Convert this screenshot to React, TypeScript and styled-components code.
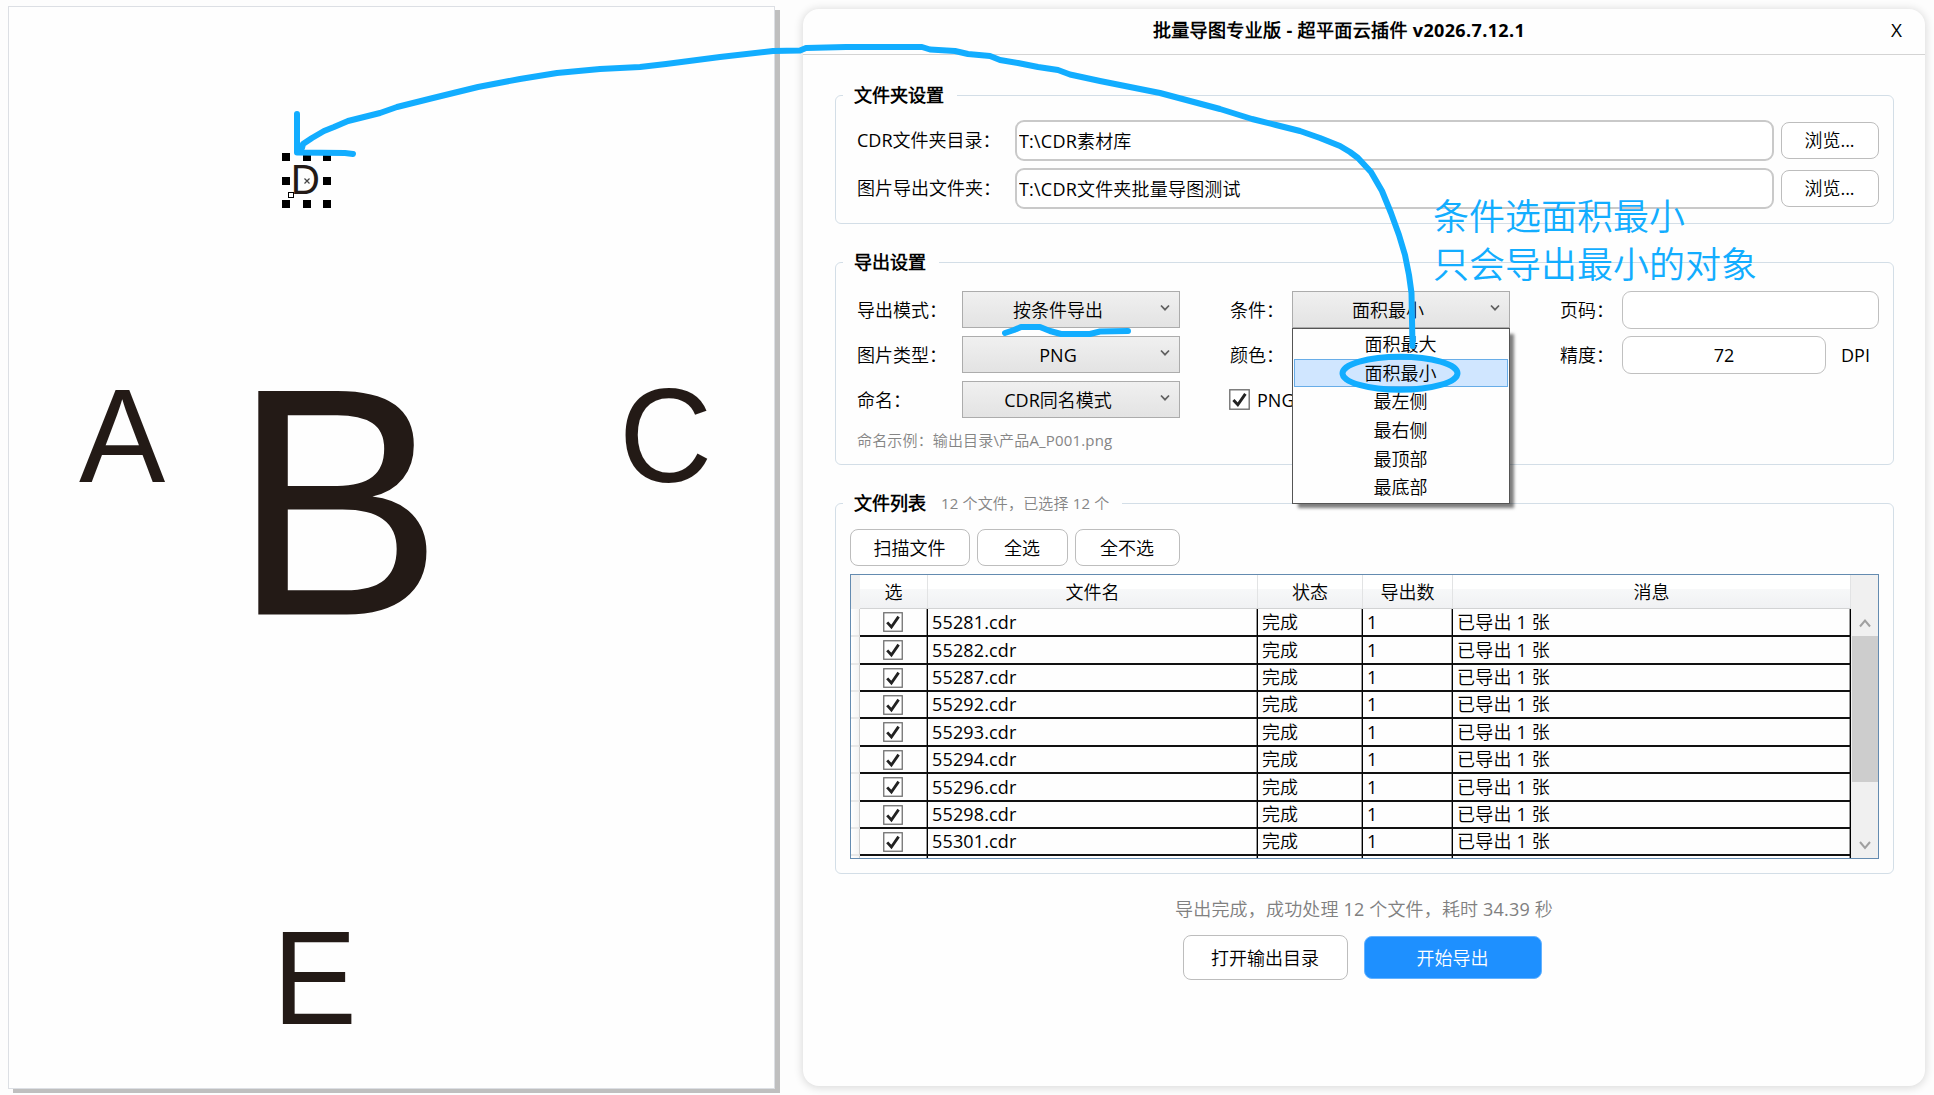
import React from "react";
import styled, { createGlobalStyle } from "styled-components";

const BLUE = "#12adff";
const INK = "#231a16";

const GlobalStyle = createGlobalStyle`
  * { box-sizing: border-box; }
  html, body { margin: 0; padding: 0; background: #fdfdfd; overflow: hidden; }
  body {
    font-family: "Open Sans", "Noto Sans CJK SC DemiLight", "Noto Sans CJK SC", sans-serif;
    font-size: 18px;
    font-weight: 400;
    color: #000;
  }
  button, input { font: inherit; color: inherit; }
`;

const Desktop = styled.main`
  position: relative;
  display: flex;
  align-items: flex-start;
  width: 1934px;
  height: 1095px;
  padding: 6px 9px 0 8px;
  overflow: hidden;
`;

const Paper = styled.section`
  width: 767px;
  height: 1083px;
  flex: none;
  background: #fefefe;
  border: 1px solid #dcdfe4;
  box-shadow: 5px 4px 0 #bfbfbf;
`;

const Artwork = styled.svg`
  display: block;
  width: 765px;
  height: 1081px;
  font-family: "Liberation Sans", Arial, sans-serif;
  font-weight: 400;
`;

const Window = styled.section`
  display: flex;
  flex-direction: column;
  width: 1122px;
  height: 1077px;
  margin: 3px 0 0 28px;
  flex: none;
  border-radius: 16px;
  background: #fefefe;
  box-shadow: 0 1px 9px 1px rgba(0, 0, 0, 0.14);
`;

const TitleBar = styled.header`
  display: grid;
  grid-template-columns: 60px 1fr 60px;
  align-items: center;
  height: 46px;
  padding-bottom: 3px;
  flex: none;
  border-bottom: 1px solid #d4d4d4;
`;

const Title = styled.h1`
  grid-column: 2;
  margin: 0 0 0 -50px;
  font-size: 18px;
  font-weight: 700;
  line-height: 24px;
  text-align: center;
  white-space: nowrap;
  letter-spacing: 0.36px;
`;

const CloseButton = styled.button`
  width: 60px;
  padding: 0 0 0 3px;
  border: 0;
  background: none;
  font-size: 19px;
  line-height: 24px;
`;

const Body = styled.div`
  display: flex;
  flex-direction: column;
  padding: 28px 31px 0 32px;
`;

const Group = styled.fieldset<{ $height: number; $gap?: number }>`
  min-width: 0;
  width: 1059px;
  height: ${(p) => p.$height}px;
  margin: 0 0 ${(p) => p.$gap ?? 0}px;
  padding: 0 14px;
  border: 1px solid #d3dee7;
  border-radius: 6px;
`;

const Legend = styled.legend`
  display: flex;
  align-items: center;
  height: 24px;
  margin-left: -7px;
  padding: 0 13px 0 11px;
  font-weight: 700;
  line-height: 24px;
  white-space: nowrap;
`;

const Note = styled.small`
  font-size: 15px;
  font-weight: 400;
  color: #858585;
  line-height: 24px;
  white-space: nowrap;
  letter-spacing: 0.16px;
`;

const LegendNote = styled(Note)`
  margin-left: 15px;
`;

const FolderGrid = styled.div`
  display: grid;
  grid-template-columns: 158px 759px 98px;
  column-gap: 0;
  row-gap: 7px;
  align-items: center;
  padding-top: 13px;
  padding-left: 7px;
`;

const Label = styled.label<{ $inset?: number }>`
  padding-left: ${(p) => p.$inset ?? 0}px;
  line-height: 26px;
  white-space: nowrap;
`;

const FolderLabel = styled(Label)`
  padding-bottom: 2px;
`;

const Field = styled.input<{ $w?: number; $h?: number; $center?: boolean }>`
  width: ${(p) => p.$w ?? 257}px;
  height: ${(p) => p.$h ?? 38}px;
  padding: 0 4px;
  border: 1.5px solid #c0c0c0;
  border-radius: 9px;
  background: #fff;
  outline: 0;
  text-align: ${(p) => (p.$center ? "center" : "left")};
`;

const FolderField = styled(Field)`
  border-width: 2px;
  border-color: #c9c9c9;
  padding: 0 2px 2px;
  letter-spacing: 0.2px;
`;

const Button = styled.button<{ $w: number; $h?: number; $primary?: boolean }>`
  width: ${(p) => p.$w}px;
  height: ${(p) => p.$h ?? 37}px;
  padding: 0 1px 0 0;
  flex: none;
  border: 1px solid ${(p) => (p.$primary ? "#63b2ff" : "#bdbdbd")};
  border-radius: 8px;
  background: ${(p) => (p.$primary ? "#1e90ff" : "#fff")};
  color: ${(p) => (p.$primary ? "#fff" : "#000")};
  line-height: 26px;
  white-space: nowrap;
`;

const BrowseButton = styled(Button)`
  justify-self: end;
  margin-right: -7px;
  padding-bottom: 1px;
`;

const OptionGrid = styled.div`
  display: grid;
  grid-template-columns: 105px 218px 112px 218px 112px 257px;
  grid-auto-rows: 37px;
  row-gap: 8px;
  align-items: center;
  padding: 17px 0 0 7px;
`;

const SelectBox = styled.div`
  position: relative;
  display: flex;
  align-items: center;
  width: 218px;
  height: 37px;
  padding-right: 9px;
  border: 1px solid #acacac;
  background: linear-gradient(#f0f0f0, #e3e3e3);
`;

const SelectValue = styled.span`
  flex: 1;
  padding-right: 7px;
  line-height: 26px;
  text-align: center;
  white-space: nowrap;
`;

const Chevron = styled.svg`
  flex: none;
  margin-top: -4px;
`;

const Menu = styled.ul`
  position: absolute;
  z-index: 2;
  top: 36px;
  left: -1px;
  width: 218px;
  height: 176px;
  margin: 0;
  padding: 1px;
  list-style: none;
  border: 1px solid #555;
  background: #fefefe;
  box-shadow: 5px 5px 3px -1px rgba(0, 0, 0, 0.5);
`;

const MenuItem = styled.li<{ $active?: boolean }>`
  height: 28.7px;
  padding-right: 1px;
  border: 1px solid ${(p) => (p.$active ? "#68ade8" : "transparent")};
  background: ${(p) => (p.$active ? "#d0e6ff" : "transparent")};
  line-height: 27px;
  text-align: center;
`;

const DpiRow = styled.div`
  display: flex;
  align-items: center;
  gap: 15px;
`;

const CheckLabel = styled.label`
  display: flex;
  align-items: center;
  gap: 7px;
  padding-left: 49px;
  width: 180px;
  line-height: 26px;
`;

const ExampleNote = styled(Note)`
  display: block;
  margin: 10px 0 0 7px;
`;

const Toolbar = styled.div`
  display: flex;
  gap: 7px;
  padding-top: 14px;
`;

const Table = styled.div`
  display: flex;
  width: 1029px;
  height: 285px;
  margin-top: 8px;
  border: 1px solid #648bb0;
  overflow: hidden;
`;

const Grid = styled.div`
  flex: none;
  width: 1000px;
  background: #fefefe;
`;

const COLUMNS = "9px 68px 330px 105px 90px 398px";

const HeadRow = styled.div`
  display: grid;
  grid-template-columns: ${COLUMNS};
  height: 34px;
`;

const HeadCell = styled.div`
  display: flex;
  align-items: center;
  justify-content: center;
  border-right: 1px solid #e2e3e4;
  border-bottom: 1px solid #d2d3d4;
  background: linear-gradient(#ffffff 0 42%, #f7f8f9 44%, #f0f1f3);
  line-height: 26px;
`;

const HeadCorner = styled.div`
  background: #f0f0f0;
`;

const Row = styled.div<{ $h: number }>`
  display: grid;
  grid-template-columns: ${COLUMNS};
  height: ${(p) => p.$h}px;
`;

const RowHeader = styled.div`
  border-right: 1px solid #cfcfcf;
  border-bottom: 2px solid #e8e8e8;
  background: linear-gradient(90deg, #ffffff, #f4f4f4);
`;

const Cell = styled.div<{ $pad?: number; $center?: boolean; $ls?: number }>`
  display: flex;
  align-items: center;
  justify-content: ${(p) => (p.$center ? "center" : "flex-start")};
  padding-left: ${(p) => p.$pad ?? 0}px;
  padding-right: ${(p) => (p.$center ? 2 : 0)}px;
  border-right: 1px solid #000;
  border-bottom: 2px solid #111;
  box-shadow: inset -1px 0 0 #9a9a9a;
  letter-spacing: ${(p) => p.$ls ?? 0}px;
  line-height: 25px;
  white-space: nowrap;
`;

const ScrollBar = styled.div`
  display: flex;
  flex-direction: column;
  align-items: center;
  width: 27px;
  padding-top: 34px;
  background: #f0f0f0;
`;

const ScrollArrow = styled.svg`
  display: block;
  flex: none;
  margin: 6px 0;
`;

const Thumb = styled.div`
  width: 26px;
  height: 146px;
  background: #cdcdcd;
`;

const ScrollSpace = styled.div`
  flex: 1;
`;

const StatusLine = styled.p`
  margin: 22px 0 0;
  padding-right: 1px;
  font-size: 18px;
  line-height: 26px;
  color: #808080;
  text-align: center;
  white-space: nowrap;
  letter-spacing: 0.17px;
`;

const Actions = styled.div`
  display: flex;
  align-items: center;
  justify-content: center;
  gap: 16px;
  margin-top: 13px;
  padding-right: 4px;
`;

const Ink = styled.svg`
  position: absolute;
  z-index: 5;
  top: 0;
  left: 0;
  pointer-events: none;
`;

const Callout = styled.p`
  position: absolute;
  z-index: 6;
  top: 193px;
  left: 1433px;
  margin: 0;
  font-size: 36px;
  line-height: 48px;
  color: ${BLUE};
  white-space: nowrap;
  pointer-events: none;
`;

const Tick = ({ size = 20 }: { size?: number }) => (
  <svg width={size} height={size} viewBox="0 0 20 20">
    <rect x="0.75" y="0.75" width="18.5" height="18.5" fill="#fff" stroke="#707070" strokeWidth="1.3" />
    <path d="M4.2 10.4 8.4 15 15.6 4.6" fill="none" stroke="#222" strokeWidth="2.8" />
  </svg>
);

const Select = ({ value, children }: { value?: string; children?: React.ReactNode }) => (
  <SelectBox>
    <SelectValue>{value}</SelectValue>
    <Chevron width="10" height="8" viewBox="0 0 10 8">
      <path d="M1 1.5 5 5.7 9 1.5" fill="none" stroke="#606060" strokeWidth="1.7" />
    </Chevron>
    {children}
  </SelectBox>
);

const LETTERS = [
  { ch: "A", x: 79, base: 482.3, size: 134, sx: 0.965 },
  { ch: "B", x: 232.4, base: 614.5, size: 325, sx: 0.972 },
  { ch: "C", x: 619, base: 482.3, size: 134, sx: 0.963 },
  { ch: "D", x: 290.7, base: 194, size: 42, sx: 0.96 },
  { ch: "E", x: 272.5, base: 1024.3, size: 134, sx: 0.943 },
];

const OPTIONS = ["面积最大", "面积最小", "最左侧", "最右侧", "最顶部", "最底部"];

const FILES = ["55281", "55282", "55287", "55292", "55293", "55294", "55296", "55298", "55301"];
const ROW_HEIGHTS = [28, 28, 27, 27, 28, 27, 28, 27, 27];

export default function App() {
  return (
    <>
      <GlobalStyle />
      <Desktop>
        <Paper>
          <Artwork viewBox="9 7 765 1081">
            {LETTERS.map((l) => (
              <text key={l.ch} transform={`translate(${l.x} ${l.base}) scale(${l.sx} 1)`} fontSize={l.size} fill={INK}>
                {l.ch}
              </text>
            ))}
            {[153, 177, 200].map((y) =>
              [282, 303, 323].map((x) =>
                y === 177 && x === 303 ? null : <rect key={`${x}-${y}`} x={x} y={y} width="8" height="8" fill="#000" />
              )
            )}
            <rect x="288.5" y="192.5" width="5" height="5" fill="#fff" stroke="#000" />
            <path d="M304.5 178.5l5 5m0-5l-5 5" stroke="#444" strokeWidth="1.2" />
          </Artwork>
        </Paper>

        <Window>
          <TitleBar>
            <Title>批量导图专业版 - 超平面云插件 v2026.7.12.1</Title>
            <CloseButton>X</CloseButton>
          </TitleBar>
          <Body>
            <Group $height={141} $gap={26}>
              <Legend>文件夹设置</Legend>
              <FolderGrid>
                <FolderLabel>CDR文件夹目录：</FolderLabel>
                <FolderField $w={759} $h={41} defaultValue="T:\CDR素材库" />
                <BrowseButton $w={98}>浏览...</BrowseButton>
                <FolderLabel>图片导出文件夹：</FolderLabel>
                <FolderField $w={759} $h={41} defaultValue="T:\CDR文件夹批量导图测试" />
                <BrowseButton $w={98}>浏览...</BrowseButton>
              </FolderGrid>
            </Group>

            <Group $height={215} $gap={26}>
              <Legend>导出设置</Legend>
              <OptionGrid>
                <Label>导出模式：</Label>
                <Select value="按条件导出" />
                <Label $inset={50}>条件：</Label>
                <Select value="面积最小">
                  <Menu>
                    {OPTIONS.map((o, i) => (
                      <MenuItem key={o} $active={i === 1}>
                        {o}
                      </MenuItem>
                    ))}
                  </Menu>
                </Select>
                <Label $inset={50}>页码：</Label>
                <Field />

                <Label>图片类型：</Label>
                <Select value="PNG" />
                <Label $inset={50}>颜色：</Label>
                <Select />
                <Label $inset={50}>精度：</Label>
                <DpiRow>
                  <Field $w={204} $center defaultValue="72" />
                  <span>DPI</span>
                </DpiRow>

                <Label>命名：</Label>
                <Select value="CDR同名模式" />
                <CheckLabel>
                  <Tick size={21} />
                  PNG
                </CheckLabel>
              </OptionGrid>
              <ExampleNote>命名示例：输出目录\产品A_P001.png</ExampleNote>
            </Group>

            <Group $height={383}>
              <Legend>
                文件列表<LegendNote>12 个文件，已选择 12 个</LegendNote>
              </Legend>
              <Toolbar>
                <Button $w={120}>扫描文件</Button>
                <Button $w={91}>全选</Button>
                <Button $w={105}>全不选</Button>
              </Toolbar>
              <Table>
                <Grid>
                  <HeadRow>
                    <HeadCorner />
                    {["选", "文件名", "状态", "导出数", "消息"].map((h) => (
                      <HeadCell key={h}>{h}</HeadCell>
                    ))}
                  </HeadRow>
                  {FILES.map((f, i) => (
                    <Row key={f} $h={ROW_HEIGHTS[i]}>
                      <RowHeader />
                      <Cell $center>
                        <Tick />
                      </Cell>
                      <Cell $pad={4} $ls={0.15}>{f}.cdr</Cell>
                      <Cell $pad={4}>完成</Cell>
                      <Cell $pad={4}>1</Cell>
                      <Cell $pad={4} $ls={0.2}>已导出 1 张</Cell>
                    </Row>
                  ))}
                  <Row $h={27}>
                    <RowHeader />
                    <Cell />
                    <Cell />
                    <Cell />
                    <Cell />
                    <Cell />
                  </Row>
                </Grid>
                <ScrollBar>
                  <ScrollArrow width="14" height="15" viewBox="0 0 14 15">
                    <path d="M2 11.5 7 5.5 12 11.5" fill="none" stroke="#a0a0a0" strokeWidth="2" />
                  </ScrollArrow>
                  <Thumb />
                  <ScrollSpace />
                  <ScrollArrow width="14" height="15" viewBox="0 0 14 15">
                    <path d="M2 5 7 11 12 5" fill="none" stroke="#a0a0a0" strokeWidth="2" />
                  </ScrollArrow>
                </ScrollBar>
              </Table>
            </Group>

            <StatusLine>导出完成，成功处理 12 个文件，耗时 34.39 秒</StatusLine>
            <Actions>
              <Button $w={165} $h={45}>打开输出目录</Button>
              <Button $w={178} $h={43} $primary>开始导出</Button>
            </Actions>
          </Body>
        </Window>

        <Ink width="1934" height="1095" viewBox="0 0 1934 1095" fill="none" stroke={BLUE} strokeWidth="6" strokeLinecap="round" strokeLinejoin="round">
          <path d="M297 114V152.5L345 153L353 154" />
          <path d="M302 148L303 144L312 138L324 131L334 127L348 121L380 113L397 107L433 98L478 87L520 79L557 73L600 69L640 67L666 64L720 57L773 51L800 50.5L806 48L846 47L922 47L930 49.5L955 51L968 54L990 56L1000 60L1018 63L1038 67L1058 70L1070 74.5L1100 81L1130 87L1160 93L1190 101L1220 109L1252 119L1276 125L1300 131L1320 138L1340 146L1350 152L1358 158L1371 172L1382 191L1391 213L1399 235L1405 255L1409 275L1411.5 293L1412.5 346" />
          <ellipse cx="1400" cy="373.3" rx="57.5" ry="16.5" />
          <path d="M1005 333L1014 330L1021 327L1040 327L1050 331L1061 334L1090 334L1100 331.5L1128 331" />
        </Ink>
        <Callout>
          条件选面积最小
          <br />
          只会导出最小的对象
        </Callout>
      </Desktop>
    </>
  );
}
